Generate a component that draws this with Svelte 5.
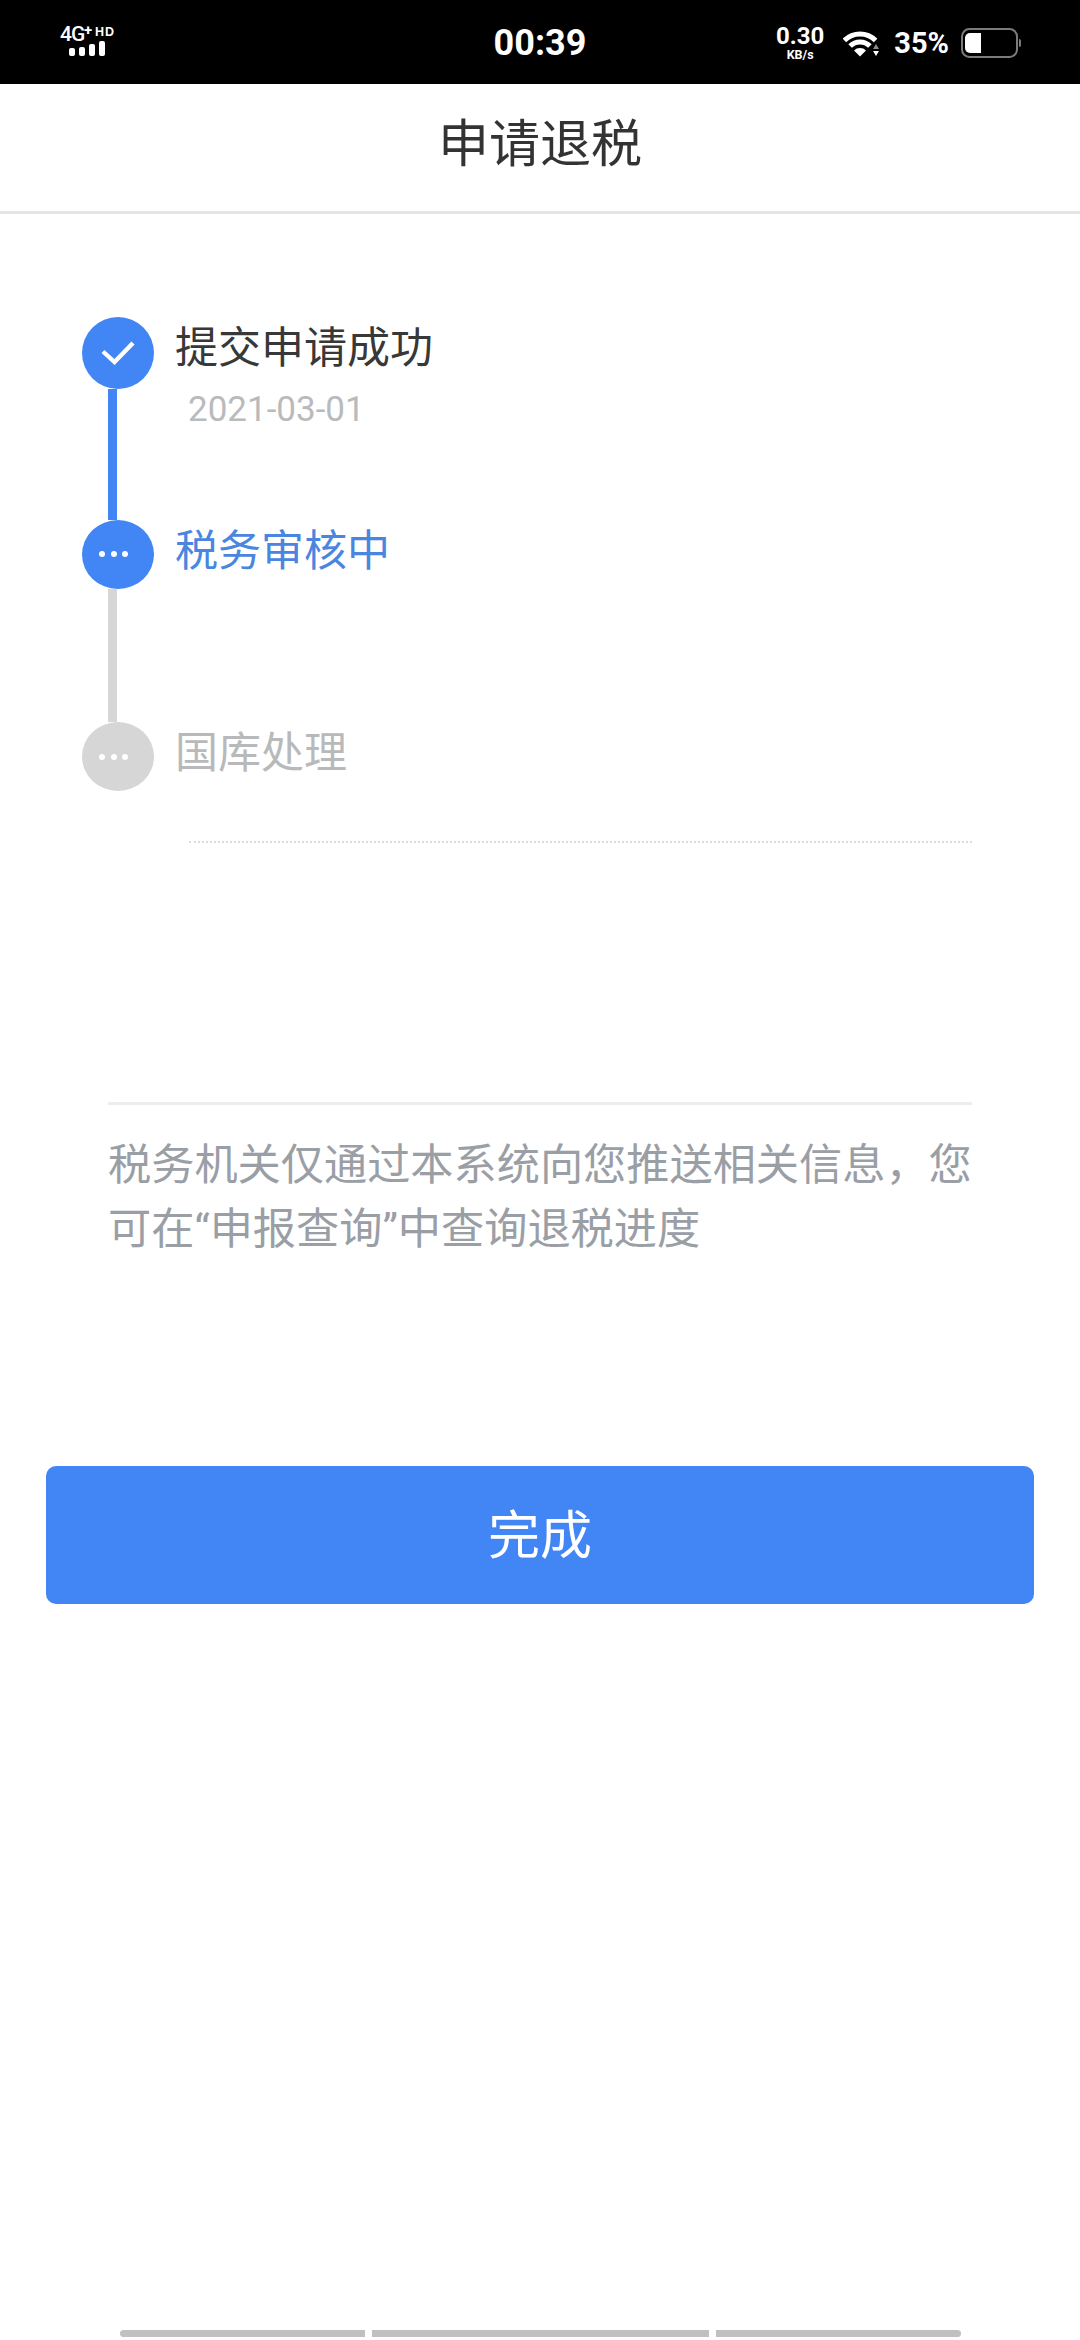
<script>
    const steps = [
        { label: '提交申请成功', date: '2021-03-01', state: 'done' },
        { label: '税务审核中', date: '', state: 'active' },
        { label: '国库处理', date: '', state: 'todo' }
    ]
    const signalBars = [8, 9, 12, 15]
</script>

<div class="page">
    <div class="status">
        <div class="net">
            <div class="net-top"><span class="g">4G</span><span class="plus">+</span><span class="hd">HD</span></div>
            <div class="bars">
                {#each signalBars as h}
                    <i style="height:{h}px"></i>
                {/each}
            </div>
        </div>
        <div class="time">00:39</div>
        <div class="right">
            <div class="speed"><span class="num">0.30</span><span class="unit">KB/s</span></div>
            <svg class="wifi" width="38" height="28" viewBox="0 0 38 28">
                <path d="M1.4 11.4a22 22 0 0 1 31.2 0" fill="none" stroke="#fff" stroke-width="5"/>
                <path d="M7.1 17.1a14 14 0 0 1 19.8 0" fill="none" stroke="#fff" stroke-width="5"/>
                <path d="M11 21.5a8.5 8.5 0 0 1 12 0L17 27.5z" fill="#fff"/>
                <path d="M33 15l3 5h-6z" fill="#8a8a8a"/>
                <path d="M30 22h6l-3 5z" fill="#fff"/>
            </svg>
            <span class="pct">35%</span>
            <svg class="battery" width="61" height="30" viewBox="0 0 61 30">
                <rect x="1" y="1" width="55" height="28" rx="7.5" fill="none" stroke="#7b7b7b" stroke-width="2"/>
                <path d="M9 5h11v20H9a5 5 0 0 1-5-5V10a5 5 0 0 1 5-5z" fill="#fff"/>
                <path d="M58 11c1.500 0 2 1 2 2v4c0 1-.5 2-2 2z" fill="#7b7b7b"/>
            </svg>
        </div>
    </div>

    <header class="title">申请退税</header>

    <ol class="timeline">
        {#each steps as step, i}
            <li class="step {step.state}">
                <div class="marker">
                    <div class="dot">
                        {#if step.state === 'done'}
                            <svg width="34" height="26" viewBox="0 0 34 26">
                                <path d="M2 11.500l11.500 10.500 18.500-19" fill="none" stroke="#fff" stroke-width="4.400"/>
                            </svg>
                        {:else}
                            <span class="more"><i></i><i></i><i></i></span>
                        {/if}
                    </div>
                    {#if i < steps.length - 1}
                        <div class="link"></div>
                    {/if}
                </div>
                <div class="body">
                    <div class="label">{step.label}</div>
                    {#if step.date}
                        <div class="date">{step.date}</div>
                    {/if}
                </div>
            </li>
        {/each}
    </ol>

    <div class="dotted"></div>

    <p class="note">税务机关仅通过本系统向您推送相关信息，您可在“申报查询”中查询退税进度</p>

    <button class="finish">完成</button>

    <div class="nav">
        <i class="a"></i><i class="b"></i><i class="c"></i>
    </div>
</div>

<style>
    :global(body) {
        margin: 0;
        background: #fff;
    }
    .page {
        position: relative;
        width: 1080px;
        height: 2340px;
        overflow: hidden;
        background: #fff;
        font-family: "Noto Sans CJK SC", "Noto Sans", sans-serif;
    }

    /* status bar */
    .status {
        height: 84px;
        background: #000;
        color: #fff;
        display: grid;
        grid-template-columns: 1fr auto 1fr;
        align-items: center;
        font-family: Roboto, sans-serif;
    }
    .net {
        align-self: start;
        margin: 25px 0 0 60px;
        width: 56px;
    }
    .net-top {
        display: flex;
        align-items: flex-start;
        height: 16px;
        font-weight: 500;
    }
    .g {
        font-size: 21px;
        line-height: 18px;
        letter-spacing: -1px;
        width: 24px;
    }
    .plus {
        font-size: 15px;
        line-height: 11px;
        font-weight: 700;
        width: 11px;
    }
    .hd {
        font-family: "Liberation Sans", sans-serif;
        font-size: 12.500px;
        line-height: 15px;
        font-weight: 700;
        letter-spacing: 1px;
    }
    .bars {
        display: flex;
        align-items: flex-end;
        gap: 4px;
        height: 15px;
        margin-left: 9px;
    }
    .bars i {
        width: 6px;
        border-radius: 2px;
        background: #fff;
    }
    .time {
        font-size: 36px;
        font-weight: 700;
        line-height: 84px;
        padding-top: 1px;
    }
    .right {
        display: flex;
        align-items: center;
        justify-content: flex-end;
        padding-right: 58px;
    }
    .speed {
        display: flex;
        flex-direction: column;
        align-items: center;
        margin-right: 19px;
        padding-top: 1px;
    }
    .speed .num {
        font-size: 24px;
        font-weight: 700;
        line-height: 24px;
    }
    .speed .unit {
        font-size: 12.500px;
        font-weight: 700;
        line-height: 14px;
    }
    .wifi {
        margin-right: 13px;
        margin-top: 1px;
    }
    .pct {
        font-size: 29px;
        font-weight: 700;
        margin-right: 12px;
    }

    .title {
        height: 127px;
        border-bottom: 3px solid #e4e6e6;
        text-align: center;
        font-size: 51px;
        line-height: 112px;
        color: #333;
    }

    /* steps */
    .timeline {
        list-style: none;
        margin: 103px 0 0;
        padding: 0 0 0 82px;
    }
    .step {
        display: flex;
        height: 202.500px;
    }
    .step:last-child {
        height: 119px;
    }
    .marker {
        width: 72px;
        display: flex;
        flex-direction: column;
    }
    .dot {
        height: 69px;
        flex: none;
        border-radius: 50%;
        display: flex;
        align-items: center;
        justify-content: center;
        background: #4285f4;
    }
    .step.done .dot {
        height: 72px;
    }
    .step.todo .dot {
        background: #d6d6d6;
    }
    .link {
        flex: 1;
        width: 9px;
        margin-left: 26px;
        background: #4285f4;
    }
    .step.active .link {
        background: #d6d6d6;
    }
    .more {
        display: flex;
        gap: 5.500px;
        margin-right: 9px;
    }
    .more i {
        width: 6px;
        height: 6px;
        border-radius: 50%;
        background: #fff;
    }
    .body {
        margin-left: 21px;
    }
    .label {
        font-size: 43px;
        line-height: 54px;
        color: #383838;
    }
    .step.active .label {
        color: #4a86e0;
    }
    .step.todo .label {
        color: #b8b9bb;
    }
    .date {
        font-family: Roboto, sans-serif;
        font-size: 35px;
        line-height: 40px;
        margin: 19px 0 0 13px;
        color: #b9babc;
    }

    .dotted {
        margin: 0 108px 0 189px;
        border-top: 2px dotted #dcdcdc;
    }
    .note {
        margin: 259px 108px 0;
        padding-top: 29px;
        border-top: 3px solid #eceded;
        font-family: Roboto, "Noto Sans CJK SC", sans-serif;
        font-size: 43.200px;
        line-height: 64px;
        color: #9a9ea5;
    }
    .finish {
        display: block;
        width: 988px;
        height: 138px;
        margin: 204px 0 0 46px;
        border: none;
        border-radius: 10px;
        background: #4285f4;
        color: #fff;
        font-family: inherit;
        font-size: 52px;
        padding: 0 0 8px;
    }

    /* gesture bar at the bottom edge */
    .nav {
        position: absolute;
        left: 120px;
        bottom: 3px;
        display: flex;
        gap: 7px;
    }
    .nav i {
        height: 7px;
        background: #c0c0c0;
    }
    .nav .a {
        width: 245px;
        border-radius: 4px 0 0 4px;
    }
    .nav .b {
        width: 337px;
    }
    .nav .c {
        width: 245px;
        border-radius: 0 4px 4px 0;
    }
</style>
